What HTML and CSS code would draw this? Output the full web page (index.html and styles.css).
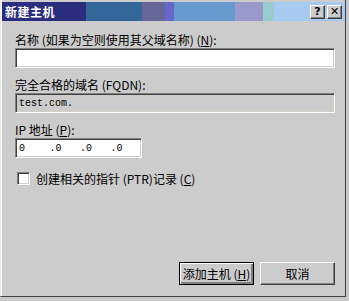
FILE: index.html
```html
<!DOCTYPE html>
<html lang="zh-CN">
<head>
    <meta charset="UTF-8">
    <title>新建主机</title>
    <link rel="stylesheet" href="styles.css">
</head>
<body>
    <div class="window">
        <div class="titlebar">
            <span class="title">新建主机</span>
            <div class="caption-buttons">
                <span class="cap-btn">?</span>
                <span class="cap-btn">✕</span>
            </div>
        </div>
        <div class="content">
            <div class="field">
                <label for="hostName">名称 (如果为空则使用其父域名称) (<u>N</u>):</label>
                <input type="text" id="hostName" class="edit">
            </div>
            <div class="field">
                <label for="fqdn">完全合格的域名 (FQDN):</label>
                <input type="text" id="fqdn" class="edit readonly" value="test.com." readonly>
            </div>
            <div class="field">
                <label>IP 地址 (<u>P</u>):</label>
                <div class="ip-box">
                    <span class="octet">0</span>
                    <span class="octet">.0</span>
                    <span class="octet">.0</span>
                    <span class="octet">.0</span>
                </div>
            </div>
            <div class="check-row">
                <span class="checkbox"></span>
                <span>创建相关的指针 (PTR)记录 (<u>C</u>)</span>
            </div>
            <div class="buttons">
                <button class="btn default">添加主机 (<u>H</u>)</button>
                <button class="btn">取消</button>
            </div>
        </div>
    </div>
</body>
</html>
```

FILE: styles.css
```css
body {
    margin: 0;
    width: 349px;
    height: 301px;
    background-color: #c8c8c8;
    font-family: "Noto Sans CJK SC", "DejaVu Sans", sans-serif;
    font-size: 12px;
    color: #000;
    overflow: hidden;
}
.window {
    width: 344px;
    height: 296px;
    background-color: #cccccc;
    border-left: 1px solid #e8e8e8;
    border-right: 1px solid #404040;
    border-bottom: 1px solid #404040;
    box-shadow: inset 1px 0 #ffffff;
    display: flex;
    flex-direction: column;
}
.titlebar {
    height: 19px;
    margin: 2px 0 0 1px;
    display: flex;
    align-items: center;
    justify-content: space-between;
    background: linear-gradient(to right,
        #2a2c7e 0, #2a2c7e 84px,
        #336699 84px, #336699 140px,
        #666699 140px, #666699 163px,
        #6666cc 163px, #6666cc 172px,
        #6699cc 172px, #6699cc 233px,
        #9999cc 233px, #9999cc 261px,
        #99cccc 261px, #99cccc 272px,
        #a6caf0 272px);
}
.title {
    color: #fff;
    font-weight: bold;
    padding-left: 3px;
    letter-spacing: 0.5px;
}
.caption-buttons {
    display: flex;
    gap: 2px;
    padding-right: 3px;
}
.cap-btn {
    width: 13px;
    height: 12px;
    background-color: #cccccc;
    border: 1px solid;
    border-color: #ffffff #404040 #404040 #ffffff;
    box-shadow: inset -1px -1px #808080;
    font-family: "DejaVu Sans", sans-serif;
    font-size: 11px;
    font-weight: bold;
    line-height: 12px;
    text-align: center;
}
.content {
    flex: 1;
    display: flex;
    flex-direction: column;
    padding: 12px 10px 10px 14px;
}
.field {
    display: flex;
    flex-direction: column;
    gap: 1px;
    margin-bottom: 10px;
}
.field label {
    line-height: 14px;
}
.edit {
    box-sizing: border-box;
    width: 320px;
    height: 20px;
    margin: 0;
    padding: 0 3px;
    border: 1px solid;
    border-color: #808080 #ffffff #ffffff #808080;
    box-shadow: inset 1px 1px #404040, inset -1px -1px #d4d0c8;
    background-color: #fff;
    font-family: "Liberation Mono", "Noto Sans CJK SC", monospace;
    font-size: 10px;
    outline: none;
}
.edit.readonly {
    background-color: #cccccc;
}
.ip-box {
    box-sizing: border-box;
    width: 127px;
    height: 20px;
    display: flex;
    align-items: center;
    padding-left: 3px;
    border: 1px solid;
    border-color: #808080 #ffffff #ffffff #808080;
    box-shadow: inset 1px 1px #404040, inset -1px -1px #d4d0c8;
    background-color: #fff;
    font-family: "Liberation Mono", monospace;
    font-size: 10px;
}
.octet {
    width: 32px;
}
.check-row {
    display: flex;
    align-items: center;
    gap: 6px;
    margin-top: 2px;
    padding-left: 2px;
}
.checkbox {
    width: 9px;
    height: 9px;
    background-color: #fff;
    border: 1px solid;
    border-color: #808080 #ffffff #ffffff #808080;
    box-shadow: inset 1px 1px #404040, inset -1px -1px #d4d0c8;
    padding: 1px;
}
.buttons {
    margin-top: auto;
    display: flex;
    justify-content: flex-end;
    gap: 6px;
    padding-bottom: 1px;
}
.btn {
    box-sizing: border-box;
    width: 75px;
    height: 23px;
    padding: 0;
    background-color: #cccccc;
    border: 1px solid;
    border-color: #ffffff #404040 #404040 #ffffff;
    box-shadow: inset -1px -1px #808080;
    font-family: "Noto Sans CJK SC", sans-serif;
    font-size: 12px;
    color: #000;
}
.btn.default {
    border: 1px solid #000;
    box-shadow: inset 1px 1px #ffffff, inset -2px -2px #808080;
}
```
